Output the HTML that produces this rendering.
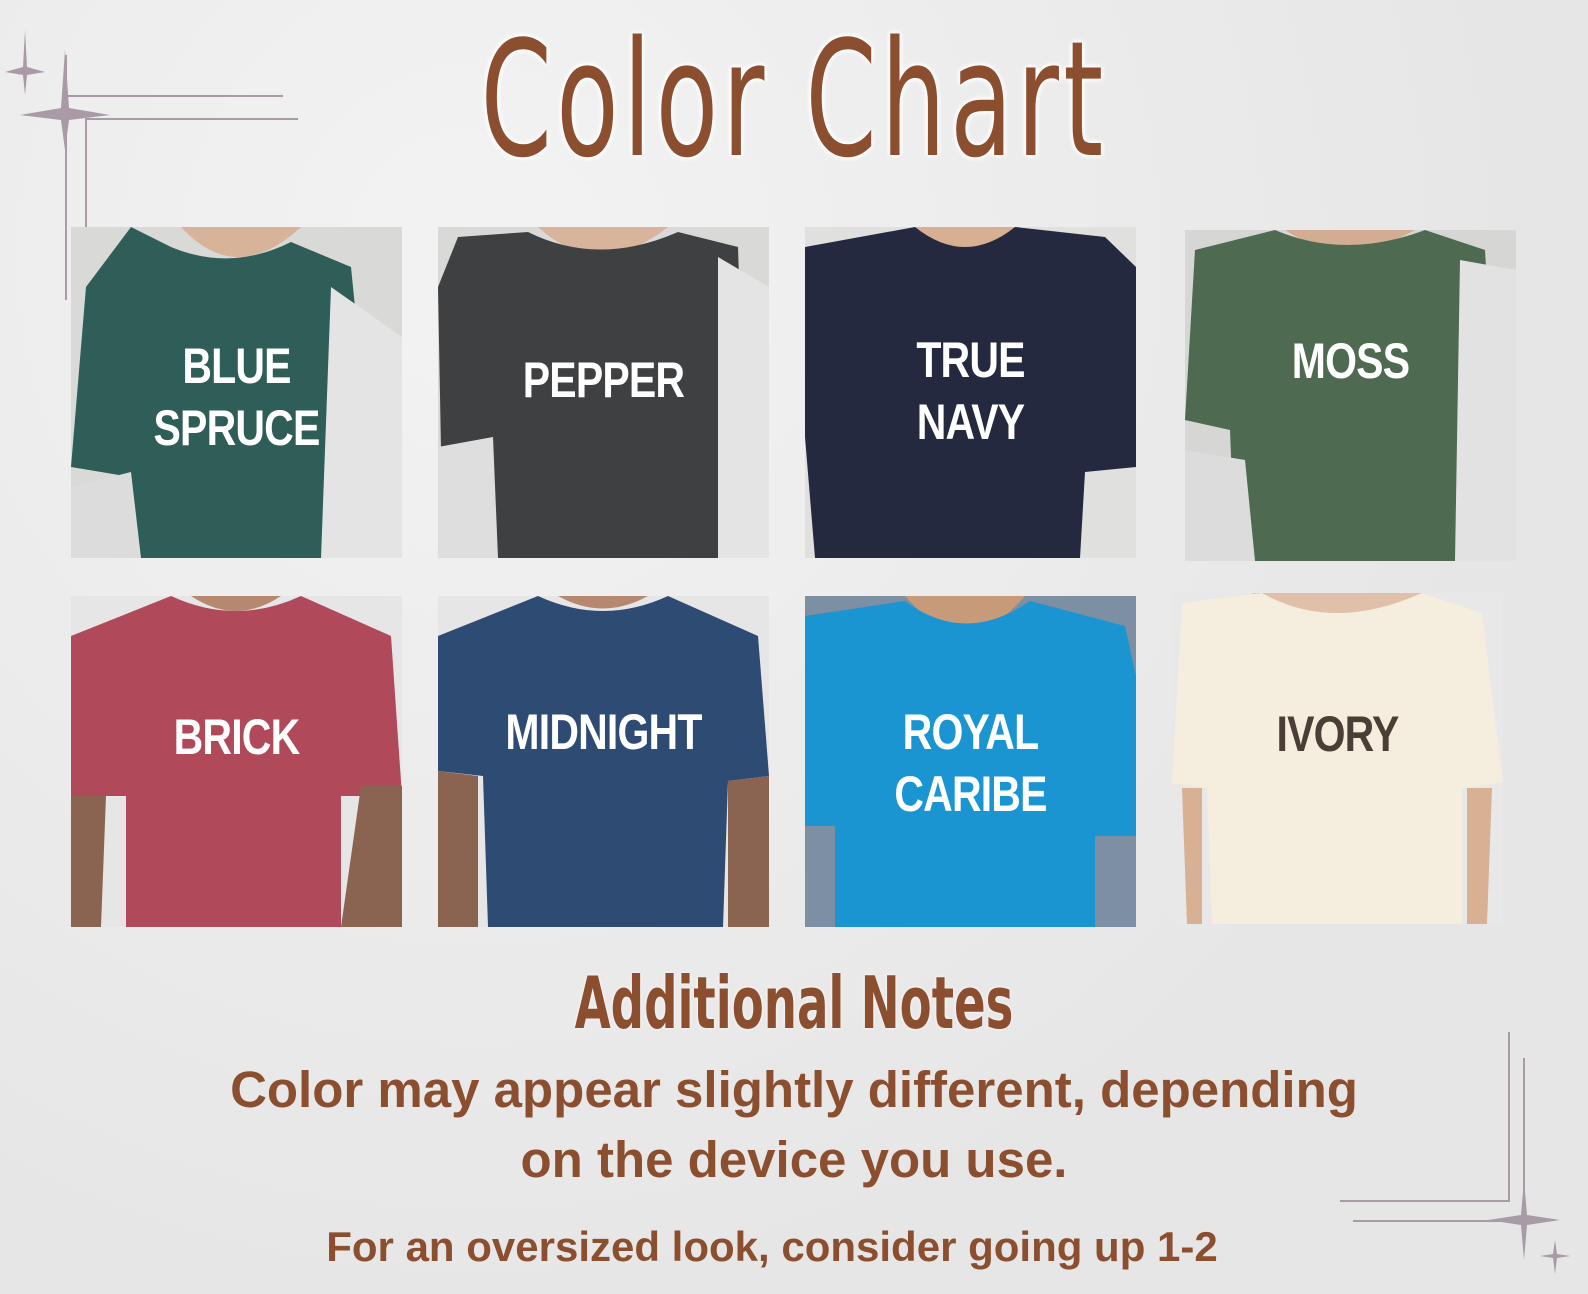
<!DOCTYPE html>
<html><head><meta charset="utf-8"><style>
body{margin:0;width:1588px;height:1294px;overflow:hidden;background:#ececec;position:relative;font-family:"Liberation Sans",sans-serif}
.bg{position:absolute;inset:0;background:radial-gradient(circle at 30% 20%,#f3f3f3,#e6e6e6 70%)}
.tile{position:absolute;width:331px;height:331px;overflow:hidden}
.tile svg{position:absolute;inset:0}
.lbl{position:absolute;left:0;right:0;text-align:center;color:#fff;font-weight:bold;font-size:50px;line-height:62px;transform:scaleX(0.82);letter-spacing:-1px;white-space:nowrap}
.title{position:absolute;left:0;top:15px;width:1588px;text-align:center;color:#8b4f2f;font-family:"DejaVu Sans Condensed","DejaVu Sans",sans-serif;font-size:160px;line-height:170px;transform:scaleX(0.71);white-space:nowrap;text-shadow:0 0 6px #fff,0 0 6px #fff,0 0 6px #fff;letter-spacing:6px}
.t{position:absolute;left:0;width:1588px;text-align:center;color:#8b4f2f;font-weight:bold;white-space:nowrap}
.line{position:absolute;background:#a89aa6}
</style></head><body>
<div class="bg"></div>
<div class="title">Color Chart</div>
<div class="line" style="left:65px;top:55px;width:2px;height:245px"></div>
<div class="line" style="left:85px;top:118px;width:2px;height:190px"></div>
<div class="line" style="left:85px;top:118px;width:213px;height:2px"></div>
<div class="line" style="left:65px;top:95px;width:218px;height:2px"></div>
<svg style="position:absolute;left:0;top:20px" width="120" height="130"><path d="M65 30 L69 88 L110 95 L69 100 L65 130 L61 100 L20 95 L61 88Z" fill="#a89aa6"/><path d="M25 10 L27 47 L45 52 L27 55 L25 75 L23 55 L5 52 L23 47Z" fill="#a89aa6"/></svg>
<div class="line" style="left:1508px;top:1032px;width:2px;height:170px"></div>
<div class="line" style="left:1523px;top:1058px;width:2px;height:190px"></div>
<div class="line" style="left:1340px;top:1200px;width:170px;height:2px"></div>
<div class="line" style="left:1353px;top:1220px;width:150px;height:2px"></div>
<svg style="position:absolute;left:1480px;top:1180px" width="108" height="114"><path d="M44 0 L47 35 L80 40 L47 45 L44 80 L41 45 L8 40 L41 35Z" fill="#a89aa6"/><path d="M75 60 L77 74 L90 76 L77 78 L75 94 L73 78 L60 76 L73 74Z" fill="#a89aa6"/></svg>

<div class="tile" style="left:71px;top:227px"><svg width="331" height="331"><rect width="331" height="331" fill="#d9d9d7"/><path d="M110 0 Q165 60 230 0Z" fill="#d7b39a"/><path d="M60 0 L100 20 Q160 45 220 15 L280 40 L300 240 L265 250 L260 331 L65 331 L60 250 L0 240 L15 60Z" fill="#2f5d58"/><path d="M260 60 L331 110 L331 331 L250 331Z" fill="#e4e4e4"/><path d="M0 260 L60 245 L70 331 L0 331Z" fill="#dcdcdc"/></svg>
<div class="lbl" style="top:108px">BLUE<br>SPRUCE</div></div>
<div class="tile" style="left:438px;top:227px"><svg width="331" height="331"><rect width="331" height="331" fill="#d9d9d7"/><path d="M100 0 Q160 55 230 0Z" fill="#d8b49c"/><path d="M20 10 L90 5 Q160 40 240 5 L300 20 L310 331 L5 331 L0 60Z" fill="#3f4042"/><path d="M280 30 L331 60 L331 331 L280 331Z" fill="#e4e4e4"/><path d="M0 220 L55 210 L60 331 L0 331Z" fill="#dedede"/></svg>
<div class="lbl" style="top:122px">PEPPER</div></div>
<div class="tile" style="left:805px;top:227px"><svg width="331" height="331"><rect width="331" height="331" fill="#e0e0de"/><path d="M110 0 Q160 70 215 0Z" fill="#d7b094"/><path d="M0 20 L110 0 Q160 40 210 0 L300 10 L331 40 L331 240 L280 245 L275 331 L10 331 L0 210Z" fill="#24293f"/></svg>
<div class="lbl" style="top:102px">TRUE<br>NAVY</div></div>
<div class="tile" style="left:1185px;top:230px"><svg width="331" height="331"><rect width="331" height="331" fill="#d6d6d4"/><path d="M100 0 Q160 40 230 0Z" fill="#d2ad94"/><path d="M10 20 L90 0 Q160 30 240 0 L300 20 L310 190 L280 200 L270 331 L50 331 L45 200 L0 190Z" fill="#4e6a50"/><path d="M275 30 L331 40 L331 331 L270 331Z" fill="#e2e2e2"/><path d="M0 220 L60 230 L70 331 L0 331Z" fill="#dcdcdc"/></svg>
<div class="lbl" style="top:100px">MOSS</div></div>

<div class="tile" style="left:71px;top:596px"><svg width="331" height="331"><rect width="331" height="331" fill="#e6e6e6"/><path d="M120 0 Q165 30 210 0Z" fill="#b78870"/><path d="M0 40 L100 0 Q165 30 230 0 L320 40 L331 200 L270 200 L270 331 L55 331 L55 200 L0 200Z" fill="#b0495a"/><path d="M0 200 L35 200 L30 331 L0 331Z M290 190 L331 190 L331 331 L270 331Z" fill="#8a6450"/></svg>
<div class="lbl" style="top:110px">BRICK</div></div>
<div class="tile" style="left:438px;top:596px"><svg width="331" height="331"><rect width="331" height="331" fill="#e6e6e6"/><path d="M120 0 Q165 25 210 0Z" fill="#b78870"/><path d="M0 40 L100 0 Q165 30 230 0 L320 40 L331 180 L290 185 L285 331 L50 331 L45 180 L0 175Z" fill="#2d4b73"/><path d="M0 175 L40 180 L40 331 L0 331Z M290 185 L331 180 L331 331 L290 331Z" fill="#8a6450"/></svg>
<div class="lbl" style="top:105px">MIDNIGHT</div></div>
<div class="tile" style="left:805px;top:596px"><svg width="331" height="331"><rect width="331" height="331" fill="#7d8fa3"/><path d="M100 0 Q160 70 220 0Z" fill="#c79a7a"/><path d="M0 20 L100 5 Q160 50 225 5 L320 30 L331 80 L331 240 L290 240 L290 331 L30 331 L30 230 L0 230Z" fill="#1b95d2"/></svg>
<div class="lbl" style="top:105px">ROYAL<br>CARIBE</div></div>
<div class="tile" style="left:1172px;top:593px"><svg width="331" height="331"><rect width="331" height="331" fill="#e8e8e8"/><path d="M80 0 Q160 60 250 0Z" fill="#e0c0a8"/><path d="M10 10 L90 0 Q160 40 250 0 L310 20 L331 190 L290 195 L290 331 L40 331 L35 195 L0 190Z" fill="#f5eddd"/><path d="M30 195 L10 195 L15 331 L30 331Z M295 195 L320 195 L315 331 L295 331Z" fill="#d8b094"/></svg>
<div class="lbl" style="top:110px;color:#4a3e36">IVORY</div></div>

<div class="t" style="top:958px;font-family:'DejaVu Sans Condensed','DejaVu Sans',sans-serif;font-size:72px;line-height:90px;transform:scaleX(0.72);text-shadow:0 0 4px #fff">Additional Notes</div>
<div class="t" style="top:1055px;font-size:51px;line-height:70px">Color may appear slightly different, depending<br>on the device you use.</div>
<div class="t" style="top:1222px;left:-22px;font-size:42px;line-height:50px">For an oversized look, consider going up 1-2</div>
</body></html>
